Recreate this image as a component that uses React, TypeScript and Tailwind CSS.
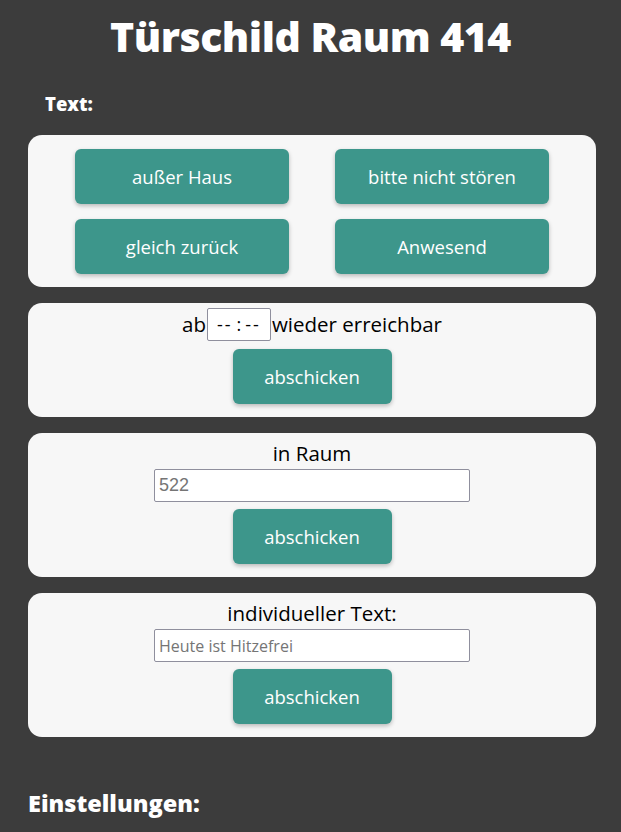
const heading = { fontFamily: "'Open Sans', Lato, sans-serif" };
const body = { fontFamily: "'Open Sans', Lato, sans-serif" };
const btnFont = { fontFamily: "'Open Sans', 'Noto Sans', sans-serif" };

const TealButton = ({ label, wide }: { label: string; wide?: boolean }) => (
  <button
    type="button"
    style={btnFont}
    className={`${wide ? "w-[214px]" : "w-[159px]"} h-[55px] rounded-md bg-[#3d968b] text-white text-[18.5px] shadow-[0_2px_4px_rgba(0,0,0,0.25)]`}
  >
    {label}
  </button>
);

const App = () => {
  return (
    <div className="min-h-[832px] w-[621px] bg-[#3c3c3c] overflow-hidden">
      {/* Title */}
      <h1
        style={heading}
        className="pt-[11px] h-[70px] text-center text-white text-[41px] font-extrabold leading-[50px] tracking-[-0.5px]"
      >
        Türschild Raum 414
      </h1>

      <div className="px-[45px] pt-[22px] h-[65px]">
        <span style={heading} className="text-white text-[18.5px] font-extrabold leading-[24px]">
          Text:
        </span>
      </div>

      <div className="ml-[28px] w-[568px] flex flex-col gap-4">
        {/* Status buttons */}
        <div className="bg-[#f7f7f7] rounded-[14px] pt-[14px] pb-[13px] flex flex-col items-center gap-[15px]">
          <div className="flex gap-[46px]">
            <TealButton label="außer Haus" wide />
            <TealButton label="bitte nicht stören" wide />
          </div>
          <div className="flex gap-[46px]">
            <TealButton label="gleich zurück" wide />
            <TealButton label="Anwesend" wide />
          </div>
        </div>

        {/* Time */}
        <div className="bg-[#f7f7f7] rounded-[14px] pt-[5px] pb-[13px] flex flex-col items-center gap-2">
          <div style={body} className="flex items-center text-black text-[20.5px] h-[33px]">
            <span>ab</span>
            <span
              className="mx-[1px] w-[64px] h-[33px] border border-[#8f8f9d] rounded-[2px] bg-white flex items-center justify-center gap-[4px] text-[18px] text-black"
              style={{ fontFamily: "'Open Sans', sans-serif" }}
            >
              <span className="tracking-[2px]">--</span>
              <span>:</span>
              <span className="tracking-[2px]">--</span>
            </span>
            <span>wieder erreichbar</span>
          </div>
          <TealButton label="abschicken" />
        </div>

        {/* Room */}
        <div className="bg-[#f7f7f7] rounded-[14px] pt-[5px] pb-[13px] flex flex-col items-center">
          <div style={body} className="text-black text-[20.5px] leading-[31px]">in Raum</div>
          <input
            placeholder="522"
            style={{ fontFamily: "'Liberation Sans', Arial, sans-serif" }}
            className="w-[316px] h-[33px] border border-[#8f8f9d] rounded-[2px] bg-white px-[4px] text-[18px] placeholder:text-[#757575] outline-none"
          />
          <div className="mt-[7px]">
            <TealButton label="abschicken" />
          </div>
        </div>

        {/* Custom text */}
        <div className="bg-[#f7f7f7] rounded-[14px] pt-[5px] pb-[13px] flex flex-col items-center">
          <div style={body} className="text-black text-[20.5px] leading-[31px]">individueller Text:</div>
          <input
            placeholder="Heute ist Hitzefrei"
            style={body}
            className="w-[316px] h-[33px] border border-[#8f8f9d] rounded-[2px] bg-white px-[4px] text-[16px] placeholder:text-[#757575] outline-none"
          />
          <div className="mt-[7px]">
            <TealButton label="abschicken" />
          </div>
        </div>
      </div>

      <div className="px-[28px] pt-[51px]">
        <h2 style={heading} className="text-white text-[23.5px] font-extrabold leading-[30px]">
          Einstellungen:
        </h2>
      </div>
    </div>
  );
};

export default App;
